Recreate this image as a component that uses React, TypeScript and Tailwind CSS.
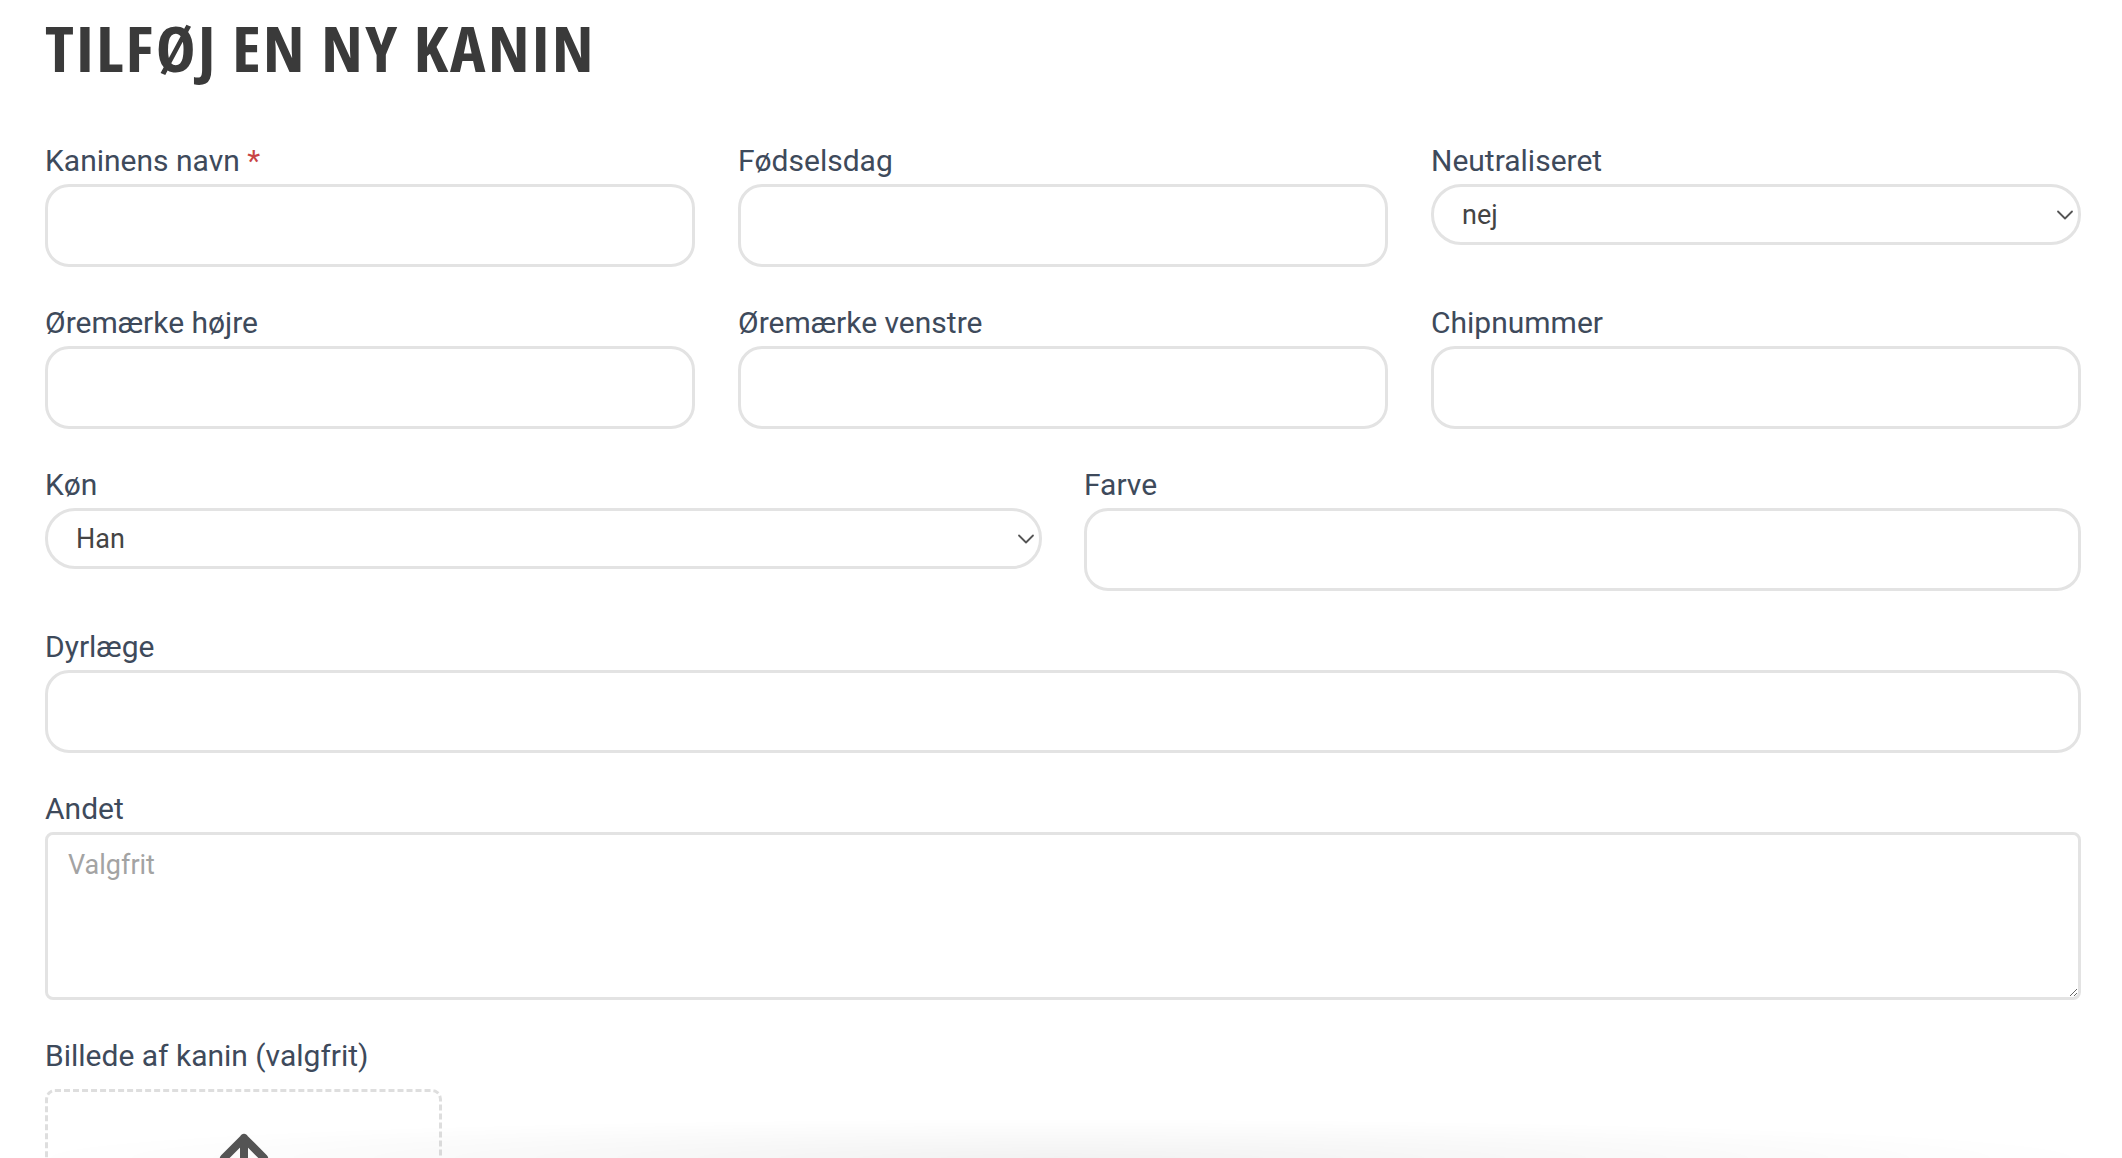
import React from 'react';

const labelCls = "block text-[30px] leading-[36px] mb-[5px] text-[#3e4a5b]";
const inputCls = "w-full h-[83px] rounded-[24px] border-[3px] border-[#e3e3e3] bg-white px-[26px] text-[28px] text-[#444] outline-none";

const Chevron = () => (
    <svg className="pointer-events-none absolute right-[7px] top-1/2 -translate-y-1/2" width="18" height="11" viewBox="0 0 18 11" fill="none">
        <path d="M2 2l7 7 7-7" stroke="#555" strokeWidth="1.8" strokeLinecap="round" strokeLinejoin="round" />
    </svg>
);

const Field = ({ label, required }: { label: string; required?: boolean }) => (
    <div>
        <label className={labelCls}>
            {label}
            {required && <span className="text-[#c94444]"> *</span>}
        </label>
        <input type="text" className={inputCls} />
    </div>
);

const SelectField = ({ label, options }: { label: string; options: string[] }) => (
    <div>
        <label className={labelCls}>{label}</label>
        <div className="relative">
            <select className="w-full h-[61px] appearance-none rounded-[30px] border-[3px] border-[#e3e3e3] bg-white pl-[28px] pr-[50px] pt-[2px] text-[27px] text-[#444] outline-none">
                {options.map(o => <option key={o}>{o}</option>)}
            </select>
            <Chevron />
        </div>
    </div>
);

const App: React.FC = () => {
    return (
        <div className="min-h-screen bg-white pl-[45px] pr-[41px] pt-[8px] font-['Roboto','Liberation_Sans',sans-serif] overflow-hidden">
            <h1 className="origin-left scale-x-[1.07] text-[63px] leading-[80px] font-bold tracking-[2px] text-[#3a3a3a] font-['Open_Sans','Liberation_Sans_Narrow',sans-serif] font-stretch-75% mb-[55px]">
                TILFØJ EN NY KANIN
            </h1>

            <div className="flex flex-col gap-[38px]">
                <div className="grid grid-cols-3 gap-x-[43px] items-start">
                    <Field label="Kaninens navn" required />
                    <Field label="Fødselsdag" />
                    <SelectField label="Neutraliseret" options={['nej', 'ja']} />
                </div>

                <div className="grid grid-cols-3 gap-x-[43px] items-start">
                    <Field label="Øremærke højre" />
                    <Field label="Øremærke venstre" />
                    <Field label="Chipnummer" />
                </div>

                <div className="grid grid-cols-2 gap-x-[42px] items-start">
                    <SelectField label="Køn" options={['Han', 'Hun']} />
                    <Field label="Farve" />
                </div>

                <Field label="Dyrlæge" />

                <div>
                    <label className={labelCls}>Andet</label>
                    <textarea
                        placeholder="Valgfrit"
                        className="block w-full h-[168px] rounded-[8px] border-[3px] border-[#e3e3e3] bg-white px-[20px] py-[10px] text-[27px] text-[#444] placeholder:text-[#a3a3a3] outline-none"
                    />
                </div>

                <div>
                    <label className="block text-[30px] leading-[36px] mb-[15px] text-[#3e4a5b]">Billede af kanin (valgfrit)</label>
                    <div className="w-[397px] h-[300px] rounded-[10px] border-[3px] border-dashed border-[#dedede] flex justify-center pt-[40px]">
                        <svg width="52" height="60" viewBox="0 0 52 60" fill="none">
                            <path d="M26 6v54M6 26L26 6l20 20" stroke="#555" strokeWidth="8" strokeLinecap="round" strokeLinejoin="round" />
                        </svg>
                    </div>
                </div>
            </div>

            <div className="pointer-events-none fixed bottom-0 left-0 right-0 h-[40px] bg-[radial-gradient(ellipse_at_bottom,rgba(0,0,0,0.05),transparent_70%)]" />
        </div>
    );
};

export default App;
